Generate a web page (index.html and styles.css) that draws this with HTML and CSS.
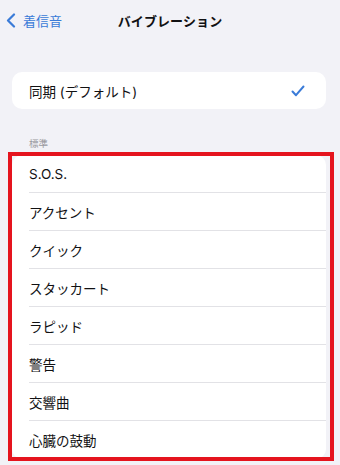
FILE: index.html
```html
<!DOCTYPE html>
<html lang="ja">
<head>
<meta charset="utf-8">
<link rel="stylesheet" href="styles.css">
</head>
<body>
<header class="nav">
  <a class="back">
    <svg class="chev" width="10" height="15" viewBox="0 0 10 15"><path d="M8 1.5 L2 7.5 L8 13.5" fill="none" stroke="#3a7bd8" stroke-width="2.2" stroke-linecap="round" stroke-linejoin="round"/></svg>
    <span>着信音</span>
  </a>
  <h1 class="title">バイブレーション</h1>
  <span></span>
</header>

<section class="card top-card">
  <div class="row selected">
    <span>同期 (デフォルト)</span>
    <svg class="check" width="14" height="12" viewBox="0 0 14 12"><path d="M1.5 6.5 L5 10.2 L12.5 1.5" fill="none" stroke="#3a7bd8" stroke-width="2" stroke-linecap="round" stroke-linejoin="round"/></svg>
  </div>
</section>

<div class="section-label">標準</div>

<div class="list-wrap">
  <section class="card list">
    <div class="row"><span>S.O.S.</span></div>
    <div class="row"><span>アクセント</span></div>
    <div class="row"><span>クイック</span></div>
    <div class="row"><span>スタッカート</span></div>
    <div class="row"><span>ラピッド</span></div>
    <div class="row"><span>警告</span></div>
    <div class="row"><span>交響曲</span></div>
    <div class="row"><span>心臓の鼓動</span></div>
  </section>
  <div class="highlight"></div>
</div>
</body>
</html>
```
FILE: styles.css
```css
html, body {
  margin: 0;
  padding: 0;
}
body {
  width: 340px;
  height: 465px;
  overflow: hidden;
  background: #f2f2f7;
  font-family: "Inter", "Noto Sans CJK JP", sans-serif;
  color: #111113;
}
.nav {
  height: 40px;
  display: grid;
  grid-template-columns: 1fr auto 1fr;
  align-items: center;
}
.back {
  display: flex;
  align-items: center;
  gap: 7px;
  padding-left: 6px;
  color: #3a7bd8;
  font-size: 13px;
}
.chev {
  display: block;
}
.title {
  margin: 0;
  font-size: 13px;
  font-weight: 700;
  letter-spacing: 0.1px;
}
.card {
  background: #ffffff;
  margin: 0 14px 0 12px;
  border-radius: 10px;
}
.top-card {
  margin-top: 32px;
}
.top-card .row {
  height: 37px;
  border-bottom: none;
  padding-right: 21px;
}
.row {
  height: 38px;
  margin-left: 17px;
  display: flex;
  align-items: center;
  justify-content: space-between;
  font-size: 13.5px;
  border-bottom: 1px solid #e2e2e6;
  box-sizing: border-box;
}
.row:last-child {
  border-bottom: none;
}
.check {
  display: block;
}
.section-label {
  margin: 29px 0 5px 29px;
  font-size: 9.5px;
  line-height: 12px;
  color: #9a9aa0;
}
.list-wrap {
  position: relative;
}
.highlight {
  position: absolute;
  top: -3px;
  left: 8px;
  right: 6px;
  bottom: -2px;
  border: 4.5px solid #e5141e;
  pointer-events: none;
}
```
